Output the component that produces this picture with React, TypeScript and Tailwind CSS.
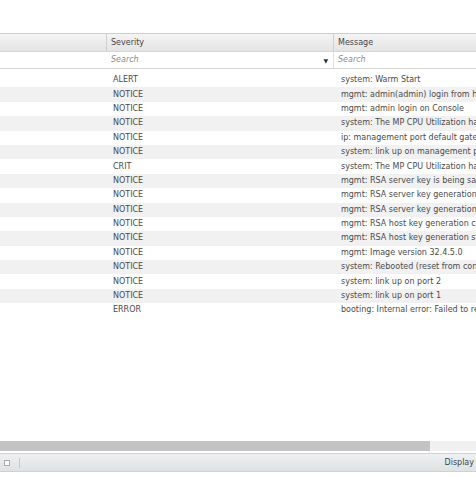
const ROWS: [string, string][] = [
  ['ALERT', 'system: Warm Start'],
  ['NOTICE', 'mgmt: admin(admin) login from host'],
  ['NOTICE', 'mgmt: admin login on Console'],
  ['NOTICE', 'system: The MP CPU Utilization has'],
  ['NOTICE', 'ip: management port default gateway'],
  ['NOTICE', 'system: link up on management port'],
  ['CRIT', 'system: The MP CPU Utilization has'],
  ['NOTICE', 'mgmt: RSA server key is being saved'],
  ['NOTICE', 'mgmt: RSA server key generation'],
  ['NOTICE', 'mgmt: RSA server key generation'],
  ['NOTICE', 'mgmt: RSA host key generation co'],
  ['NOTICE', 'mgmt: RSA host key generation st'],
  ['NOTICE', 'mgmt: Image version 32.4.5.0'],
  ['NOTICE', 'system: Rebooted (reset from console'],
  ['NOTICE', 'system: link up on port 2'],
  ['NOTICE', 'system: link up on port 1'],
  ['ERROR', 'booting: Internal error: Failed to read'],
];

export default function App() {
  return (
    <div
      className="flex h-[477px] w-[476px] flex-col overflow-hidden bg-white text-[8px] text-[#4a4a4a]"
      style={{ fontFamily: '"DejaVu Sans", Verdana, sans-serif' }}
    >
      <div className="h-[33px] shrink-0" />

      {/* column headers */}
      <div className="flex h-[18px] shrink-0 border-t border-[#cfcfcf] bg-gradient-to-b from-[#f4f4f4] to-[#e4e4e4] text-[#444]">
        <div className="w-[107px] shrink-0 border-r border-[#d0d0d0]" />
        <div className="flex w-[227px] shrink-0 items-center border-r border-[#d0d0d0] pl-[4px]">Severity</div>
        <div className="flex flex-1 items-center pl-[4px] whitespace-nowrap">Message</div>
      </div>

      {/* filter row */}
      <div className="flex h-[18px] shrink-0 border-y border-[#d6d6d6] bg-white">
        <div className="w-[107px] shrink-0" />
        <div className="flex w-[227px] shrink-0 items-center justify-between border-r border-[#e0e0e0] pl-[4px] pr-[5px]">
          <span className="italic text-[#8a8a8a]">Search</span>
          <span className="text-[6px] text-[#333]">▼</span>
        </div>
        <div className="flex flex-1 items-center pl-[4px]">
          <span className="italic text-[#8a8a8a]">Search</span>
        </div>
      </div>

      {/* rows */}
      <div className="flex min-w-0 flex-1 flex-col overflow-hidden pt-[4px]">
        {ROWS.map(([sev, msg], i) => (
          <div
            key={i}
            className={`flex h-[14.4px] shrink-0 items-center whitespace-nowrap ${i % 2 === 1 ? 'bg-[#f1f1f1]' : 'bg-white'}`}
          >
            <div className="w-[107px] shrink-0" />
            <div className="w-[227px] shrink-0 pl-[6px]">{sev}</div>
            <div className="min-w-0 flex-1 overflow-hidden pl-[7px]">{msg}</div>
          </div>
        ))}
      </div>

      {/* horizontal scrollbar */}
      <div className="flex h-[10px] shrink-0 bg-[#f0f0f0]">
        <div className="w-[430px] bg-[#c3c3c3]" />
      </div>
      <div className="h-[2px] shrink-0 bg-white" />

      {/* status bar */}
      <div className="flex h-[19px] shrink-0 items-center border-y border-[#cdd3d3] bg-gradient-to-b from-[#eef1f1] to-[#dde2e2]">
        <div className="flex items-center gap-[3px] pl-[4px]">
          <span className="h-[6px] w-[6px] border border-[#aaa] bg-white" />
          <span className="ml-[6px] h-[10px] w-[1px] bg-[#c4c8c8]" />
        </div>
        <div className="ml-auto pr-[2px] text-[#444]">Display</div>
      </div>
      <div className="h-[5px] shrink-0 bg-white" />
    </div>
  );
}
